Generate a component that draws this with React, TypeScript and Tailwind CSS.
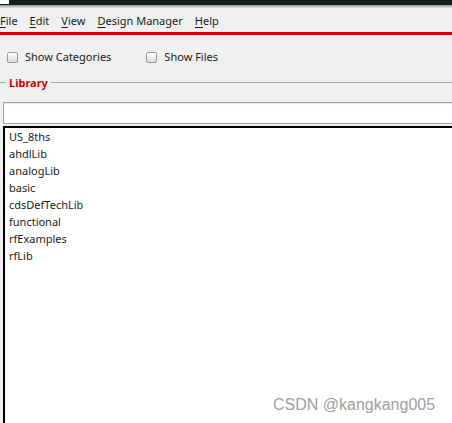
import React from "react";

const libs = ["US_8ths", "ahdlLib", "analogLib", "basic", "cdsDefTechLib", "functional", "rfExamples", "rfLib"];

const menus: { first: string; rest: string }[] = [
  { first: "F", rest: "ile" },
  { first: "E", rest: "dit" },
  { first: "V", rest: "iew" },
  { first: "D", rest: "esign Manager" },
  { first: "H", rest: "elp" },
];

function Checkbox({ label }: { label: string }) {
  return (
    <div className="flex items-center gap-[7px]">
      <span className="w-[11px] h-[11px] rounded-[2px] border border-[#9a9a9a] bg-gradient-to-b from-[#ffffff] to-[#dcdcdc]" />
      <span>{label}</span>
    </div>
  );
}

export default function App() {
  return (
    <div
      className="relative w-[452px] h-[423px] overflow-hidden bg-[#f0f0f0] text-[11px] text-[#1a1a1a]"
      style={{ fontFamily: '"Noto Sans", "DejaVu Sans", sans-serif' }}
    >
      {/* window title strip */}
      <div className="relative h-[5px] bg-[#1c1c1c]">
        <div className="absolute left-0 top-0 w-[9px] h-[4px] bg-white" />
      </div>
      <div className="h-[2px] bg-gradient-to-b from-[#8a96a6] to-[#c4cad2]" />
      <div className="h-[1px] bg-[#d8d8d8]" />

      {/* menu bar */}
      <div className="flex h-[24px] items-center gap-[12px] pl-0 leading-none">
        {menus.map((m) => (
          <span key={m.first + m.rest}>
            <span className="underline underline-offset-2">{m.first}</span>
            {m.rest}
          </span>
        ))}
      </div>
      <div className="h-[3px] bg-[#cc0000]" />

      {/* options */}
      <div className="flex h-[45px] items-center gap-[35px] pl-[7px] pb-[1px]">
        <Checkbox label="Show Categories" />
        <Checkbox label="Show Files" />
      </div>

      {/* library group */}
      <div className="flex items-center h-[12px] -mt-[4px]">
        <div className="w-[6px] h-px bg-[#a8a8a8]" />
        <span className="px-[3px] font-bold text-[#cc0000] leading-none">Library</span>
        <div className="flex-1 h-px bg-[#a8a8a8]" />
      </div>

      <div className="pl-[3px] pt-[14px]">
        <div className="h-[22px] bg-white border border-[#a0a0a0] border-r-0 shadow-[inset_0_1px_1px_rgba(0,0,0,0.1)]" />
        <div className="h-[2px]" />
        <div className="h-[300px] bg-white border-t-2 border-l-2 border-black pl-[4px]">
          {libs.map((l) => (
            <div key={l} className="h-[17px] leading-[17px]">
              {l}
            </div>
          ))}
        </div>
      </div>

      <div
        className="absolute left-[273px] top-[393px] text-[16px] text-[#a0a0a0]"
        style={{ fontFamily: '"Liberation Sans", Arial, sans-serif' }}
      >
        CSDN @kangkang005
      </div>
    </div>
  );
}
